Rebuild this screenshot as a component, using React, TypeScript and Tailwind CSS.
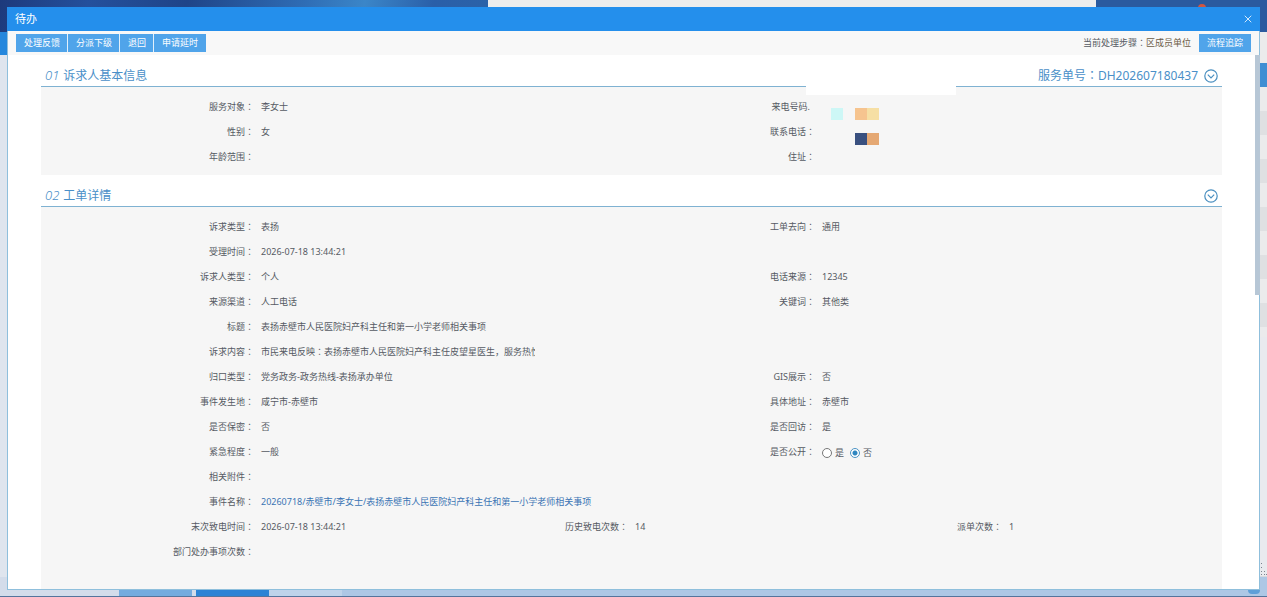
import React from 'react';
import { X } from 'lucide-react';

type Field = {
  label: string;
  value?: React.ReactNode;
  noColon?: boolean;
};

const actions = ['处理反馈', '分派下级', '退回', '申请延时'];

const basicRows: Field[][] = [
  [
    { label: '服务对象', value: '李女士' },
    {
      label: '来电号码.',
      noColon: true,
      value: <Mosaic blocks={['bg-[#cdf7f6]', 'bg-transparent', 'bg-[#f6c48f]', 'bg-[#f6dfa4]']} />,
    },
  ],
  [
    { label: '性别', value: '女' },
    {
      label: '联系电话',
      value: <Mosaic blocks={['bg-transparent', 'bg-transparent', 'bg-[#39507f]', 'bg-[#e5a873]']} />,
    },
  ],
  [{ label: '年龄范围' }, { label: '住址' }],
];

const detailRows: Field[][] = [
  [{ label: '诉求类型', value: '表扬' }, { label: '工单去向', value: '通用' }],
  [{ label: '受理时间', value: '2026-07-18 13:44:21' }],
  [{ label: '诉求人类型', value: '个人' }, { label: '电话来源', value: '12345' }],
  [{ label: '来源渠道', value: '人工电话' }, { label: '关键词', value: '其他类' }],
  [{ label: '标题', value: '表扬赤壁市人民医院妇产科主任和第一小学老师相关事项' }],
  [
    {
      label: '诉求内容',
      value: (
        <span className="block w-[274px] overflow-hidden">
          市民来电反映
          <Colon />
          表扬赤壁市人民医院妇产科主任皮望星医生，服务热忱
        </span>
      ),
    },
  ],
  [{ label: '归口类型', value: '党务政务-政务热线-表扬承办单位' }, { label: 'GIS展示', value: '否' }],
  [{ label: '事件发生地', value: '咸宁市-赤壁市' }, { label: '具体地址', value: '赤壁市' }],
  [{ label: '是否保密', value: '否' }, { label: '是否回访', value: '是' }],
  [{ label: '紧急程度', value: '一般' }, { label: '是否公开', value: <PublicChoice /> }],
  [{ label: '相关附件' }],
  [
    {
      label: '事件名称',
      value: (
        <a href="#event" className="text-[#3a74b4]">
          20260718/赤壁市/李女士/表扬赤壁市人民医院妇产科主任和第一小学老师相关事项
        </a>
      ),
    },
  ],
  [
    { label: '末次致电时间', value: '2026-07-18 13:44:21' },
    { label: '历史致电次数', value: '14' },
    { label: '派单次数', value: '1' },
  ],
  [{ label: '部门处办事项次数' }],
];

function Colon() {
  return <span className="font-['Noto_Sans_CJK_JP',sans-serif]">：</span>;
}

// Masked phone number
function Mosaic({ blocks }: { blocks: string[] }) {
  return (
    <span className="absolute left-[9px] top-3.5 flex">
      {blocks.map((color, i) => (
        <span key={i} className={`size-3 ${color}`} />
      ))}
    </span>
  );
}

function PublicChoice() {
  const radio =
    "size-2.5 appearance-none rounded-full border border-[#777] bg-white checked:border-[#4b93c4] checked:bg-[radial-gradient(circle,#2f86c0_2px,white_3px)]";
  return (
    <span className="flex h-[27px] items-center gap-1.5">
      <label className="flex items-center gap-[3px]">
        <input type="radio" name="public" className={radio} />
        是
      </label>
      <label className="flex items-center gap-[3px]">
        <input type="radio" name="public" defaultChecked className={radio} />
        否
      </label>
    </span>
  );
}

function Row({ fields }: { fields: Field[] }) {
  const columns =
    fields.length === 3 ? 'grid-cols-3' : fields.length === 2 ? 'grid-cols-2' : 'grid-cols-1';
  return (
    <dl className={`grid ${columns}`}>
      {fields.map((field) => (
        <div key={field.label} className="flex h-[25px] leading-[25px] whitespace-nowrap">
          <dt className={`w-[191px] shrink-0 text-right ${field.noColon ? 'pr-3' : 'pr-[7px]'}`}>
            {field.label}
            {!field.noColon && <Colon />}
          </dt>
          <dd className="relative">{field.value}</dd>
        </div>
      ))}
    </dl>
  );
}

function ToggleButton({ label }: { label: string }) {
  return (
    <button type="button" aria-label={label} className="text-[#4a8fc0]">
      <svg viewBox="0 0 14 14" className="size-3.5" fill="none" stroke="currentColor" strokeWidth="1.2">
        <circle cx="7" cy="7" r="6.2" />
        <path d="M3.8 5.6 7 8.8l3.2-3.2" />
      </svg>
    </button>
  );
}

type SectionProps = {
  number: string;
  title: string;
  extra?: React.ReactNode;
  className?: string;
  rows: Field[][];
  children?: React.ReactNode;
};

function Section({ number, title, extra, className = '', rows, children }: SectionProps) {
  return (
    <section className={`relative flex flex-col ${className}`}>
      <div className="flex items-center justify-between border-b border-[#7fb2d2] pt-3 pr-1 pb-0.5 pl-1 text-xs leading-4 text-[#4a8fc8]">
        <h2 className="flex items-baseline gap-1">
          <span className="text-[13px] font-light italic">{number}</span>
          {title}
        </h2>
        <div className="flex items-center gap-1.5">
          {extra}
          <ToggleButton label={title} />
        </div>
      </div>
      <div className="flex-1 bg-[#f6f6f6] pt-[7px] pr-[30px] pb-1.5 pl-[29px]">
        {rows.map((fields) => (
          <Row key={fields[0].label} fields={fields} />
        ))}
      </div>
      {children}
    </section>
  );
}

// Desktop page that shows around the dialog
function Backdrop() {
  return (
    <div className="flex h-full flex-col bg-[#dfe5ee]" aria-hidden="true">
      <div className="flex h-8">
        <div className="w-[488px] bg-[linear-gradient(100deg,#1d3a7c_0%,#24509c_18%,#1f4488_38%,#2f6db5_62%,#3b86c8_74%,#2a5fa8_88%,#2b62a8_100%)]" />
        <div className="flex-1 bg-[#ededed]" />
        <div className="flex w-[171px] justify-end bg-[#2a5a9f] pt-1 pr-[61px]">
          <div className="size-2 rounded-full bg-[#d2553f]" />
        </div>
      </div>
      <div className="flex flex-1 justify-between">
        <div className="h-[23px] w-4 bg-[#2487dd]" />
        <div className="flex w-4 flex-col bg-[#ebebec] pt-[31px]">
          <div className="h-6 bg-[#3f8ed3]" />
          <div className="flex-1 bg-[repeating-linear-gradient(#ebebec_0_24px,#dfe0e2_24px_48px)]" />
          <div className="flex h-60 items-end justify-end border-b border-[#d5d8de] bg-[#e9eaee]">
            <svg viewBox="0 0 6 14" className="h-3.5 w-1.5" fill="#7d8490">
              <path d="M0 1h1v1H0zM0 5h1v1H0zM0 9h1v1H0zM3 9h1v1H3zM0 12h1v1H0zM3 12h1v1H3zM5 12h1v1H5z" />
            </svg>
          </div>
        </div>
      </div>
      <div className="flex h-5 border-b border-[#54749c] bg-[#adc7e5]">
        <div className="w-[119px] bg-[#d3dcea]" />
        <div className="w-[73px] bg-[#74abdf]" />
        <div className="w-1 bg-[#d3dcea]" />
        <div className="w-[73px] bg-[#2c83d5]" />
        <div className="w-[73px] bg-[#bed3ea]" />
        <div className="mr-[7px] ml-auto h-[17px] w-3 rounded-b bg-[#5f9fd8]" />
      </div>
    </div>
  );
}

export default function App() {
  return (
    <div className="relative h-screen overflow-hidden font-['Noto_Sans','Noto_Sans_CJK_SC',sans-serif] text-[9px] text-[#555a63]">
      <Backdrop />

      <div
        role="dialog"
        aria-label="待办"
        className="absolute inset-[7px] flex flex-col border border-t-0 border-[#8fbfdc] bg-white"
      >
        <header className="-mx-px flex h-6 shrink-0 items-center justify-between bg-[#248fec] pr-1.5 pl-2 text-[11px] text-white">
          <h1>待办</h1>
          <button type="button" aria-label="关闭">
            <X className="size-3 text-[#d3e9fc]" strokeWidth={2} />
          </button>
        </header>

        {/* Toolbar */}
        <div className="flex shrink-0 items-center justify-between bg-[#f8f8f8] px-2 py-[3px]">
          <div className="flex">
            {actions.map((action) => (
              <button
                key={action}
                type="button"
                className="h-[18px] border-r border-[#e3f0fb] bg-[#50a4ea] pr-[7px] pl-2 text-white last:border-[#50a4ea]"
              >
                {action}
              </button>
            ))}
          </div>
          <div className="flex items-center gap-2">
            <p>
              当前处理步骤
              <Colon />
              <span className="text-[#6b5b45]">区成员单位</span>
            </p>
            <button type="button" className="h-[18px] bg-[#50a4ea] px-2 text-white">
              流程追踪
            </button>
          </div>
        </div>

        <div className="flex min-h-0 flex-1">
          <main className="flex min-w-0 flex-1 flex-col px-[33px]">
            <Section
              number="01"
              title="诉求人基本信息"
              rows={basicRows}
              extra={
                <p>
                  服务单号
                  <Colon />
                  DH202607180437
                </p>
              }
            >
              <div className="absolute top-7 right-[266px] h-3 w-[150px] bg-white" />
            </Section>
            <Section number="02" title="工单详情" rows={detailRows} className="flex-1" />
          </main>
          <div className="w-1">
            <div className="h-[45%] w-[5px] bg-[#b7c7d6]" />
          </div>
        </div>
      </div>
    </div>
  );
}
